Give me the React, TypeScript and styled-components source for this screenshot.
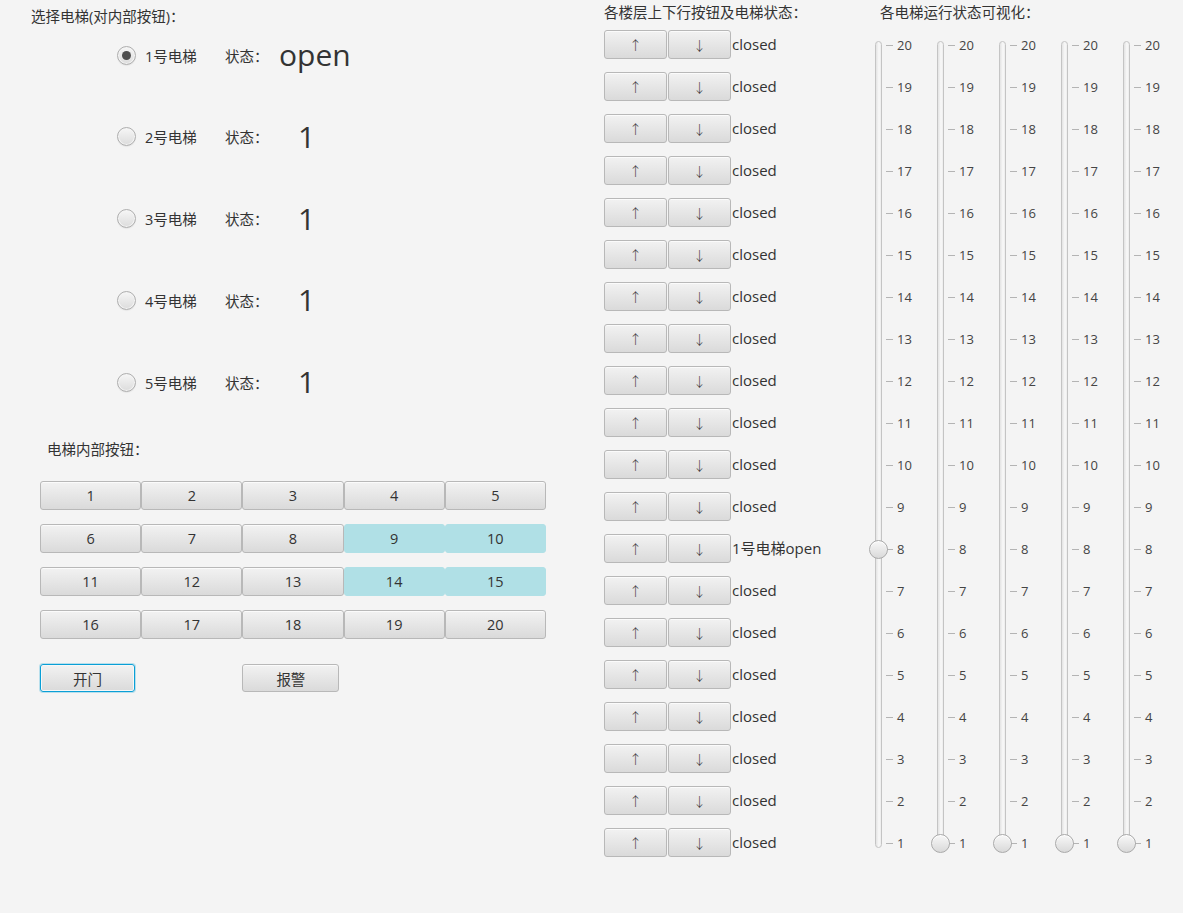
import React from 'react';
import styled, { createGlobalStyle, css } from 'styled-components';

const GlobalStyle = createGlobalStyle`
  html, body { margin: 0; padding: 0; background: #f4f4f4; }
  body {
    font-family: "Open Sans", "Noto Sans CJK SC", sans-serif;
    color: #333;
    font-size: 15px;
  }
  * { box-sizing: border-box; }
`;

const Page = styled.div`
  display: flex;
  width: 1183px;
  height: 913px;
  background: #f4f4f4;
  overflow: hidden;
`;

const Heading = styled.div<{ $indent: number; $top: number }>`
  height: 20px;
  line-height: 20px;
  font-size: 14.5px;
  white-space: nowrap;
  padding-left: ${(p) => p.$indent}px;
  margin-top: ${(p) => p.$top}px;
`;

/* ---------- left panel ---------- */
const LeftPanel = styled.div`
  width: 604px;
  flex: none;
  display: flex;
  flex-direction: column;
`;

const RadioList = styled.div`
  display: flex;
  flex-direction: column;
  gap: 45.75px;
  margin-top: 10px;
  padding-left: 117px;
`;

const RadioRow = styled.div`
  display: flex;
  align-items: center;
  height: 36px;
`;

const RadioCircle = styled.span<{ $checked: boolean }>`
  width: 19px;
  height: 19px;
  border-radius: 50%;
  border: 1px solid #aeaeae;
  background: linear-gradient(#f6f6f6, #dcdcdc);
  box-shadow: inset 0 0 0 1px #f4f4f4, 0 1px 1px rgba(0, 0, 0, 0.06);
  display: flex;
  align-items: center;
  justify-content: center;
  margin-right: 9px;
  flex: none;
  &::after {
    content: '';
    width: 9px;
    height: 9px;
    border-radius: 50%;
    background: #4f4f4f;
    display: ${(p) => (p.$checked ? 'block' : 'none')};
  }
`;

const RadioLabel = styled.span`
  width: 80px;
  font-size: 14.5px;
  white-space: nowrap;
`;

const StateLabel = styled.span`
  width: 55px;
  font-size: 14.5px;
  white-space: nowrap;
`;

const StateValue = styled.span<{ $offset: number }>`
  font-size: 30px;
  line-height: 36px;
  margin-left: ${(p) => p.$offset}px;
  color: #333;
`;

const KeyGrid = styled.div`
  display: grid;
  grid-template-columns: repeat(5, 101.2px);
  grid-auto-rows: 29px;
  row-gap: 14px;
  margin-top: 21px;
  margin-left: 40px;
`;

const buttonBase = css`
  font-family: "Open Sans", "Noto Sans CJK SC", sans-serif;
  font-size: 14.5px;
  color: #333;
  border-radius: 3px;
  padding: 0;
  display: flex;
  align-items: center;
  justify-content: center;
  border: 1px solid #b8b8b8;
  background: linear-gradient(#f2f2f2, #dadada);
  box-shadow: inset 0 1px 0 #fbfbfb;
  cursor: default;
`;

const KeyButton = styled.button<{ $lit: boolean }>`
  ${buttonBase}
  ${(p) =>
    p.$lit &&
    css`
      background: #b0e0e6;
      border-color: #b0e0e6;
      box-shadow: none;
    `}
`;

const DoorRow = styled.div`
  display: grid;
  grid-template-columns: repeat(5, 101.2px);
  margin-top: 25px;
  margin-left: 40px;
`;

const DoorButton = styled.button<{ $focused?: boolean; $col: number; $w: number }>`
  ${buttonBase}
  height: 28px;
  width: ${(p) => p.$w}px;
  grid-column: ${(p) => p.$col};
  ${(p) =>
    p.$focused &&
    css`
      border-color: #0a9fd6;
      box-shadow: 0 0 0 1px rgba(3, 158, 211, 0.25), inset 0 0 0 1px #f7f7f7;
    `}
`;

/* ---------- middle panel ---------- */
const MiddlePanel = styled.div`
  width: 271px;
  flex: none;
  display: flex;
  flex-direction: column;
`;

const FloorList = styled.div`
  display: flex;
  flex-direction: column;
  gap: 13px;
  margin-top: 7px;
`;

const FloorRow = styled.div`
  display: flex;
  align-items: center;
  height: 29px;
  gap: 1px;
`;

const ArrowButton = styled.button`
  ${buttonBase}
  width: 63px;
  height: 29px;
  font-family: "Noto Sans CJK SC", sans-serif;
  font-size: 13px;
  font-weight: 300;
  color: #3a3a3a;
`;

const FloorState = styled.span`
  font-size: 15px;
  white-space: nowrap;
  margin-top: -2px;
`;

/* ---------- right panel ---------- */
const RightPanel = styled.div`
  flex: 1;
  display: flex;
  flex-direction: column;
`;

const SliderRow = styled.div`
  display: flex;
  margin-top: 13px;
`;

const SliderCol = styled.div`
  width: 62px;
  height: 816px;
  flex: none;
  display: flex;
`;

const TrackWrap = styled.div`
  position: relative;
  width: 7px;
  height: 100%;
  margin-right: 4px;
  padding: 5px 0 4px;
`;

const Track = styled.div`
  width: 7px;
  height: 100%;
  border-radius: 4px;
  border: 1px solid #c4c4c4;
  background: linear-gradient(to right, #e3e3e3, #f9f9f9 60%, #ececec);
`;

const Thumb = styled.div`
  position: absolute;
  left: -6px;
  width: 19px;
  height: 19px;
  border-radius: 50%;
  border: 1px solid #a9a9a9;
  background: linear-gradient(#f8f8f8, #d9d9d9);
  box-shadow: inset 0 1px 0 #ffffff;
`;

const Ticks = styled.div`
  display: flex;
  flex-direction: column;
  justify-content: space-between;
  height: 100%;
`;

const Tick = styled.div`
  display: flex;
  align-items: center;
  height: 18px;
`;

const TickDash = styled.span`
  width: 7px;
  height: 1px;
  background: #b4b4b4;
  margin-right: 4px;
`;

const TickLabel = styled.span`
  font-size: 13px;
  color: #444;
`;

const elevators = [
  { id: 1, value: 'open', offset: -1, checked: true },
  { id: 2, value: '1', offset: 18, checked: false },
  { id: 3, value: '1', offset: 18, checked: false },
  { id: 4, value: '1', offset: 18, checked: false },
  { id: 5, value: '1', offset: 18, checked: false },
];

const lit = new Set([9, 10, 14, 15]);
const floorsDesc = Array.from({ length: 20 }, (_, i) => 20 - i);
const sliderFloors = [8, 1, 1, 1, 1];

function Slider({ floor }: { floor: number }) {
  return (
    <SliderCol>
      <TrackWrap>
        <Track />
        <Thumb style={{ top: (20 - floor) * 42 - 0.5 }} />
      </TrackWrap>
      <Ticks>
        {floorsDesc.map((f) => (
          <Tick key={f}>
            <TickDash />
            <TickLabel>{f}</TickLabel>
          </Tick>
        ))}
      </Ticks>
    </SliderCol>
  );
}

export default function App() {
  return (
    <>
      <GlobalStyle />
      <Page>
        <LeftPanel>
          <Heading $indent={31} $top={7}>选择电梯(对内部按钮)：</Heading>
          <RadioList>
            {elevators.map((e) => (
              <RadioRow key={e.id}>
                <RadioCircle $checked={e.checked} />
                <RadioLabel>{e.id}号电梯</RadioLabel>
                <StateLabel>状态：</StateLabel>
                <StateValue $offset={e.offset}>{e.value}</StateValue>
              </RadioRow>
            ))}
          </RadioList>
          <Heading $indent={47} $top={40}>电梯内部按钮：</Heading>
          <KeyGrid>
            {Array.from({ length: 20 }, (_, i) => i + 1).map((n) => (
              <KeyButton key={n} $lit={lit.has(n)}>
                {n}
              </KeyButton>
            ))}
          </KeyGrid>
          <DoorRow>
            <DoorButton $focused $col={1} $w={95}>开门</DoorButton>
            <DoorButton $col={3} $w={97}>报警</DoorButton>
          </DoorRow>
        </LeftPanel>

        <MiddlePanel>
          <Heading $indent={0} $top={3}>各楼层上下行按钮及电梯状态：</Heading>
          <FloorList>
            {floorsDesc.map((f) => (
              <FloorRow key={f}>
                <ArrowButton>↑</ArrowButton>
                <ArrowButton>↓</ArrowButton>
                <FloorState>{f === 8 ? '1号电梯open' : 'closed'}</FloorState>
              </FloorRow>
            ))}
          </FloorList>
        </MiddlePanel>

        <RightPanel>
          <Heading $indent={5} $top={3}>各电梯运行状态可视化：</Heading>
          <SliderRow>
            {sliderFloors.map((f, i) => (
              <Slider key={i} floor={f} />
            ))}
          </SliderRow>
        </RightPanel>
      </Page>
    </>
  );
}
